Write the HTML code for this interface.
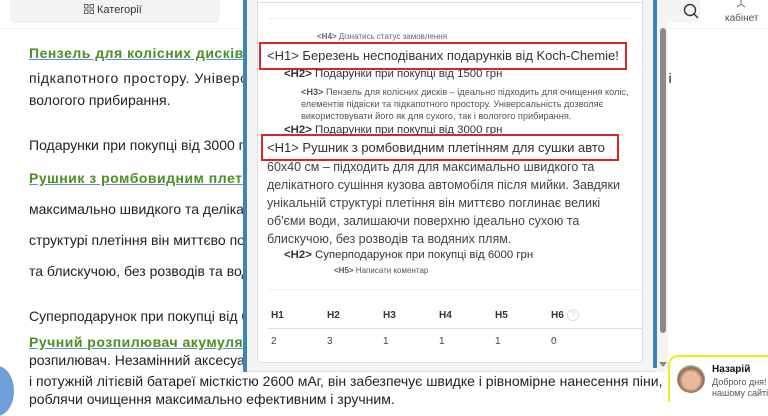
<!DOCTYPE html>
<html><head><meta charset="utf-8"><style>
*{margin:0;padding:0;box-sizing:border-box}
body{width:768px;height:402px;overflow:hidden;background:#fff;font-family:"Liberation Sans",Arial,sans-serif;position:relative;color:#222}
.hdr{position:absolute;left:0;top:0;width:768px;height:28px;background:#fff}
.cat{position:absolute;left:10px;top:-6px;width:210px;height:29px;background:#f2f3f5;border-radius:5px;font-size:11px;color:#333}
.cat span{position:absolute;left:87px;top:10px}
.l{position:absolute;left:29px;font-size:14px;color:#222;white-space:nowrap}
.g{color:#4a8f22;font-weight:bold;text-decoration:underline;text-decoration-color:#5a8fe0;letter-spacing:.5px}
.pop{position:absolute;left:243px;top:0;width:425px;height:372px;background:#f4f4f4;border-right:1px solid #ddd;border-bottom:1px solid #ddd}
.pop .bl{position:absolute;left:0;top:0;width:4px;height:372px;background:#3a86b4}
.pop .br{position:absolute;left:410px;top:0;width:4px;height:368px;background:#3a86b4}
.sb{position:absolute;left:414px;top:0;width:11px;height:372px;background:#f4f4f4}
.th{position:absolute;left:3px;top:28px;width:6px;height:305px;background:#8a8a8a;border-radius:3px}
.card{position:absolute;left:14px;top:0;width:386px;height:363px;background:#fff;border:1px solid #ddd;border-top:none;border-radius:0 0 4px 4px;font-family:"Liberation Sans",sans-serif;color:#444;overflow:hidden}
.t{position:absolute;white-space:nowrap}
.box{position:absolute;border:2px solid #d62828}
.chat{position:absolute;left:712px;white-space:nowrap;overflow:hidden;width:56px}
</style></head><body>
<div class="hdr"></div>
<div class="cat"><svg style="position:absolute;left:74px;top:10px" width="10" height="10" viewBox="0 0 10 10" fill="none" stroke="#666" stroke-width="1"><rect x=".5" y=".5" width="3.5" height="3.5"/><rect x="6" y=".5" width="3.5" height="3.5"/><rect x=".5" y="6" width="3.5" height="3.5"/><rect x="6" y="6" width="3.5" height="3.5"/></svg><span>Категорії</span></div>
<div style="position:absolute;left:668px;top:0;width:32px;height:23px;background:#f4f5f7;border-radius:0 0 5px 5px"></div>
<svg style="position:absolute;left:683px;top:3px" width="16" height="16" viewBox="0 0 16 16" fill="none" stroke="#333" stroke-width="1.4"><circle cx="7" cy="7" r="5.5"/><path d="M11 11l4 4"/></svg>
<svg style="position:absolute;left:735px;top:0" width="12" height="8" viewBox="0 0 12 8" fill="none" stroke="#666"><path d="M6 0v3M2 7l4-3 4 3"/></svg>
<div style="position:absolute;left:725px;top:13px;font-size:10px;color:#555">кабінет</div>
<div style="position:absolute;left:0;top:28px;width:768px;height:1px;background:#eee"></div>

<div class="l" style="top:45px"><span class="g">Пензель для колісних дисків</span> – ідеально підходить для очищення коліс, елементів підвіски та</div>
<div class="l" style="top:70px;letter-spacing:.6px">підкапотного простору. Універсальність дозволяє використовувати його як для сухого, так і</div>
<div class="l" style="top:92px">вологого прибирання.</div>
<div class="l" style="top:137px">Подарунки при покупці від 3000 грн</div>
<div class="l" style="top:170px"><span class="g">Рушник з ромбовидним плетінням для сушки авто</span></div>
<div class="l" style="top:201px">максимально швидкого та делікатного сушіння кузова</div>
<div class="l" style="top:232px">структурі плетіння він миттєво поглинає великі</div>
<div class="l" style="top:263px">та блискучою, без розводів та водяних плям.</div>
<div class="l" style="top:308px">Суперподарунок при покупці від 6000 грн</div>
<div class="l" style="top:334px"><span class="g">Ручний розпилювач акумуляторний</span></div>
<div class="l" style="top:352px">розпилювач. Незамінний аксесуар</div>
<div class="l" style="top:373px">і потужній літієвій батареї місткістю 2600 мАг, він забезпечує швидке і рівномірне нанесення піни,</div>
<div class="l" style="top:391px">роблячи очищення максимально ефективним і зручним.</div>
<div style="position:absolute;left:-20px;top:366px;width:34px;height:50px;border-radius:50%;background:#6f9fd8"></div>

<div style="position:absolute;left:668px;top:355px;width:100px;height:47px;background:#fff;border-left:2px solid #f5e81c;border-top:2px solid #f5e81c;border-radius:10px 0 0 0"></div>
<div style="position:absolute;left:677px;top:365px;width:28px;height:28px;border-radius:50%;background:radial-gradient(circle at 50% 55%,#e8b99a 0 40%,#8a6a55 60%,#ccc 75%)"></div>
<div class="chat" style="top:364px;font-size:10px;font-weight:bold;color:#111">Назарій</div>
<div class="chat" style="top:377px;font-size:9px;color:#555;line-height:11px">Доброго дня!<br>нашому сайті</div>

<div class="pop">
<div class="bl"></div><div class="br"></div>
<div class="sb"><div class="th"></div><div style="position:absolute;left:2px;top:362px;border:4px solid transparent;border-top:5px solid #888"></div></div>
<div class="card">
<div style="position:absolute;left:0;top:0;width:386px;height:3px;border-bottom:1px solid #ddd"></div>
<div style="position:absolute;left:10px;top:18px;width:364px;height:1px;background:#eee"></div>
<div class="t" style="left:59px;top:32px;font-size:8px;color:#666"><b>&lt;H4&gt;</b> Дізнатись статус замовлення</div>
<div class="box" style="left:1px;top:42px;width:368px;height:28px"></div>
<div class="t" style="left:9px;top:48px;font-size:13px;color:#333">&lt;H1&gt; Березень несподіваних подарунків від Koch-Chemie!</div>
<div class="t" style="left:26px;top:68px;font-size:11.4px;color:#333"><b>&lt;H2&gt;</b> Подарунки при покупці від 1500 грн</div>
<div class="t" style="left:43px;top:86px;font-size:9.2px;line-height:12px;color:#555"><b>&lt;H3&gt;</b> Пензель для колісних дисків – ідеально підходить для очищення коліс,<br>елементів підвіски та підкапотного простору. Універсальність дозволяє<br>використовувати його як для сухого, так і вологого прибирання.</div>
<div class="t" style="left:26px;top:124px;font-size:11.4px;color:#333"><b>&lt;H2&gt;</b> Подарунки при покупці від 3000 грн</div>
<div class="box" style="left:3px;top:134px;width:358px;height:27px"></div>
<div class="t" style="left:9px;top:140px;font-size:13px;color:#333">&lt;H1&gt; Рушник з ромбовидним плетінням для сушки авто</div>
<div class="t" style="left:9px;top:158px;font-size:12.5px;line-height:18px;color:#444">60x40 см – підходить для для максимально швидкого та<br>делікатного сушіння кузова автомобіля після мийки. Завдяки<br>унікальній структурі плетіння він миттєво поглинає великі<br>об'єми води, залишаючи поверхню ідеально сухою та<br>блискучою, без розводів та водяних плям.</div>
<div class="t" style="left:26px;top:249px;font-size:11.4px;color:#333"><b>&lt;H2&gt;</b> Суперподарунок при покупці від 6000 грн</div>
<div class="t" style="left:76px;top:266px;font-size:8px;color:#555"><b>&lt;H5&gt;</b> Написати коментар</div>
<div style="position:absolute;left:10px;top:289px;width:374px;height:1px;background:#eee"></div>
<div class="t" style="left:13px;top:310px;font-size:10px;color:#333;font-weight:bold">H1</div>
<div class="t" style="left:69px;top:310px;font-size:10px;color:#333;font-weight:bold">H2</div>
<div class="t" style="left:125px;top:310px;font-size:10px;color:#333;font-weight:bold">H3</div>
<div class="t" style="left:181px;top:310px;font-size:10px;color:#333;font-weight:bold">H4</div>
<div class="t" style="left:237px;top:310px;font-size:10px;color:#333;font-weight:bold">H5</div>
<div class="t" style="left:293px;top:310px;font-size:10px;color:#333;font-weight:bold">H6</div>
<div style="position:absolute;left:309px;top:309px;width:12px;height:12px;border-radius:50%;border:1px solid #ddd;font-size:8px;color:#ccc;text-align:center;line-height:10px">?</div>
<div style="position:absolute;left:10px;top:328px;width:374px;height:1px;background:#ddd"></div>
<div class="t" style="left:13px;top:336px;font-size:10px">2</div>
<div class="t" style="left:69px;top:336px;font-size:10px">3</div>
<div class="t" style="left:125px;top:336px;font-size:10px">1</div>
<div class="t" style="left:181px;top:336px;font-size:10px">1</div>
<div class="t" style="left:237px;top:336px;font-size:10px">1</div>
<div class="t" style="left:293px;top:336px;font-size:10px">0</div>
</div>
</div>
</body></html>
